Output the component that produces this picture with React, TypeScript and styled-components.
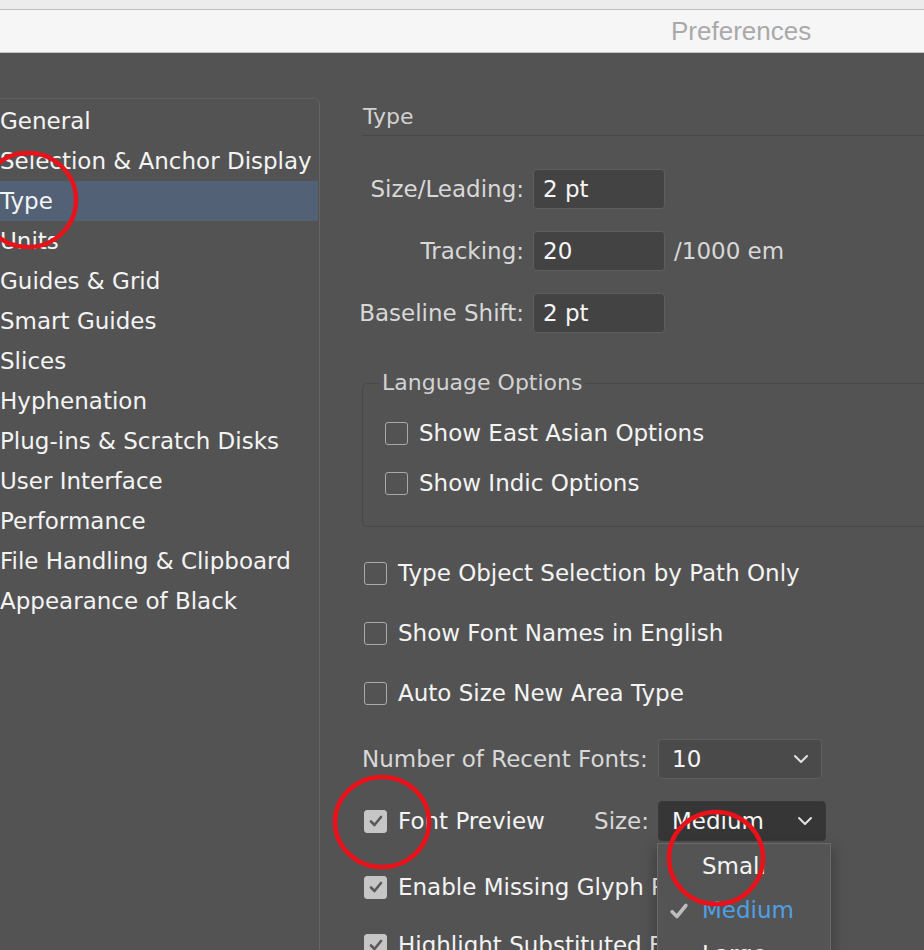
import React from "react";
import styled, { createGlobalStyle } from "styled-components";

const GlobalStyle = createGlobalStyle`
  html, body { margin: 0; padding: 0; background: #535353; overflow: hidden; }
  #root { height: 950px; }
  * { box-sizing: border-box; }
`;

const Window = styled.div`
  position: relative;
  width: 924px;
  height: 950px;
  overflow: hidden;
  display: flex;
  flex-direction: column;
  font-family: "DejaVu Sans", sans-serif;
`;

const TopStrip = styled.div`
  flex: 0 0 10px;
  height: 10px;
  background: #ececec;
  border-bottom: 1px solid #bdbdbd;
`;

const TitleBar = styled.header`
  flex: 0 0 43px;
  height: 43px;
  background: #f6f6f6;
  border-bottom: 1px solid #c6c6c6;
  display: flex;
  align-items: center;
  padding-left: 671px;
  font-family: "Liberation Sans", sans-serif;
  font-size: 26px;
  color: #a9a9a9;
  white-space: nowrap;
`;

const Body = styled.div`
  flex: 1 0 auto;
  display: flex;
  background: #535353;
  padding-top: 45px;
`;

const Sidebar = styled.nav`
  width: 320px;
  flex: 0 0 320px;
  border-top: 1px solid #606060;
  border-right: 1px solid #646464;
  border-top-right-radius: 6px;
  padding-top: 2px;
`;

const NavItem = styled.div<{ $active?: boolean }>`
  height: 40px;
  line-height: 40px;
  margin-right: 1px;
  font-size: 23px;
  color: #f4f4f4;
  white-space: nowrap;
  background: ${(p) => (p.$active ? "#536176" : "transparent")};
`;

const Main = styled.main`
  flex: 1;
  padding-left: 42px;
  display: flex;
  flex-direction: column;
  min-width: 0;
`;

const SectionHeader = styled.div`
  height: 38px;
  display: flex;
  align-items: center;
  padding-left: 1px;
  font-size: 22px;
  color: #d2d2d2;
  border-bottom: 1px solid #494949;
  margin-right: -10px;
`;

const FieldGrid = styled.div`
  margin-top: 33px;
  display: grid;
  grid-template-columns: 162px 132px auto;
  column-gap: 9px;
  row-gap: 22px;
  align-items: center;
`;

const FieldLabel = styled.label<{ $start?: boolean }>`
  justify-self: ${(p) => (p.$start ? "start" : "end")};
  white-space: nowrap;
  font-size: 23px;
  color: #d8d8d8;
`;

const TextInput = styled.div`
  height: 40px;
  display: flex;
  align-items: center;
  padding-left: 9px;
  background: #434343;
  border: 1.5px solid #5e5e5e;
  border-radius: 4px;
  font-size: 23px;
  color: #f6f6f6;
`;

const Unit = styled.span`
  font-size: 23px;
  color: #d8d8d8;
  white-space: nowrap;
`;

const Group = styled.fieldset`
  margin: 36px -20px 0 0;
  padding: 18px 0 25px 16px;
  border: 1px solid #484848;
  border-radius: 5px;
  min-width: 0;
`;

const Legend = styled.legend`
  padding: 0 3px;
  font-size: 22px;
  line-height: 28px;
  color: #d2d2d2;
`;

const GroupBody = styled.div`
  padding-left: 4px;
  display: flex;
  flex-direction: column;
  gap: 14px;
`;

const CheckList = styled.div`
  margin-top: 28px;
  display: flex;
  flex-direction: column;
  gap: 24px;
`;

const CheckRow = styled.div`
  height: 36px;
  display: flex;
  align-items: center;
  gap: 11px;
  padding-left: 2px;
  font-size: 23px;
  color: #f4f4f4;
  white-space: nowrap;
`;

const Box = styled.span<{ $checked?: boolean }>`
  width: 23px;
  height: 23px;
  flex: 0 0 23px;
  border-radius: 3px;
  border: 1.5px solid ${(p) => (p.$checked ? "#c6c6c6" : "#a9a9a9")};
  background: ${(p) => (p.$checked ? "#c6c6c6" : "transparent")};
  display: flex;
  align-items: center;
  justify-content: center;
`;

const SelectGrid = styled.div`
  margin-top: 28px;
  display: grid;
  grid-template-columns: 287px auto;
  column-gap: 9px;
  row-gap: 22px;
  align-items: center;
`;

const PreviewCell = styled.div`
  display: flex;
  align-items: center;
  justify-content: space-between;
`;

const Select = styled.div<{ $open?: boolean; $width: number }>`
  position: relative;
  width: ${(p) => p.$width}px;
  height: 40px;
  display: flex;
  align-items: center;
  justify-content: space-between;
  padding: 0 12px 0 13px;
  border-radius: 4px;
  background: ${(p) => (p.$open ? "#363636" : "#4a4a4a")};
  border: 1.5px solid ${(p) => (p.$open ? "#3a3a3a" : "#5e5e5e")};
  font-size: 23px;
  color: #f6f6f6;
`;

const Menu = styled.div`
  position: absolute;
  top: 41px;
  left: -2px;
  width: 174px;
  padding: 0;
  background: #545454;
  border: 1px solid #6a6a6a;
  box-shadow: 0 6px 14px rgba(0, 0, 0, 0.35);
  z-index: 2;
`;

const MenuItem = styled.div<{ $selected?: boolean }>`
  position: relative;
  height: 44px;
  display: flex;
  align-items: center;
  padding-left: 44px;
  font-size: 23px;
  color: ${(p) => (p.$selected ? "#4f9fe4" : "#f4f4f4")};
`;

const MenuCheck = styled.span`
  position: absolute;
  left: 10px;
  top: 12px;
  display: flex;
`;

const BottomList = styled.div`
  margin-top: 28px;
  display: flex;
  flex-direction: column;
  gap: 22px;
`;

const Annotations = styled.svg`
  position: absolute;
  left: 0;
  top: 0;
  width: 924px;
  height: 950px;
  pointer-events: none;
  z-index: 5;
`;

const Chevron = () => (
  <svg width="16" height="10" viewBox="0 0 16 10">
    <polyline points="2,2 8,8 14,2" fill="none" stroke="#e2e2e2" strokeWidth="2" strokeLinecap="round" strokeLinejoin="round" />
  </svg>
);

const Tick = ({ color, size = 16 }: { color: string; size?: number }) => (
  <svg width={size} height={size} viewBox="0 0 16 16">
    <polyline points="3,8.5 6.5,12 13,4" fill="none" stroke={color} strokeWidth="2.6" strokeLinecap="round" strokeLinejoin="round" />
  </svg>
);

const Check = ({ label, checked }: { label: string; checked?: boolean }) => (
  <CheckRow>
    <Box $checked={checked}>{checked && <Tick color="#5a5a5a" />}</Box>
    <span>{label}</span>
  </CheckRow>
);

const navItems = [
  "General",
  "Selection & Anchor Display",
  "Type",
  "Units",
  "Guides & Grid",
  "Smart Guides",
  "Slices",
  "Hyphenation",
  "Plug-ins & Scratch Disks",
  "User Interface",
  "Performance",
  "File Handling & Clipboard",
  "Appearance of Black",
];

export default function App() {
  return (
    <>
      <GlobalStyle />
      <Window>
        <TopStrip />
        <TitleBar>Preferences</TitleBar>
        <Body>
          <Sidebar>
            {navItems.map((n) => (
              <NavItem key={n} $active={n === "Type"}>
                {n}
              </NavItem>
            ))}
          </Sidebar>
          <Main>
            <SectionHeader>Type</SectionHeader>
            <FieldGrid>
              <FieldLabel>Size/Leading:</FieldLabel>
              <TextInput>2 pt</TextInput>
              <span />
              <FieldLabel>Tracking:</FieldLabel>
              <TextInput>20</TextInput>
              <Unit>/1000 em</Unit>
              <FieldLabel>Baseline Shift:</FieldLabel>
              <TextInput>2 pt</TextInput>
              <span />
            </FieldGrid>
            <Group>
              <Legend>Language Options</Legend>
              <GroupBody>
                <Check label="Show East Asian Options" />
                <Check label="Show Indic Options" />
              </GroupBody>
            </Group>
            <CheckList>
              <Check label="Type Object Selection by Path Only" />
              <Check label="Show Font Names in English" />
              <Check label="Auto Size New Area Type" />
            </CheckList>
            <SelectGrid>
              <FieldLabel $start>Number of Recent Fonts:</FieldLabel>
              <Select $width={164}>
                <span>10</span>
                <Chevron />
              </Select>
              <PreviewCell>
                <Check label="Font Preview" checked />
                <FieldLabel>Size:</FieldLabel>
              </PreviewCell>
              <Select $width={168} $open>
                <span>Medium</span>
                <Chevron />
                <Menu>
                  <MenuItem>Small</MenuItem>
                  <MenuItem $selected>
                    <MenuCheck>
                      <Tick color="#bdbdbd" size={22} />
                    </MenuCheck>
                    Medium
                  </MenuItem>
                  <MenuItem>Large</MenuItem>
                </Menu>
              </Select>
            </SelectGrid>
            <BottomList>
              <Check label="Enable Missing Glyph Protection" checked />
              <Check label="Highlight Substituted Fonts" checked />
            </BottomList>
          </Main>
        </Body>
        <Annotations viewBox="0 0 924 950">
          <ellipse cx="28" cy="200" rx="48" ry="47" fill="none" stroke="#e8121a" strokeWidth="4.5" />
          <ellipse cx="382" cy="822" rx="47" ry="45" fill="none" stroke="#e8121a" strokeWidth="4.5" />
          <ellipse cx="716" cy="858" rx="47" ry="46" fill="none" stroke="#e8121a" strokeWidth="4.5" />
        </Annotations>
      </Window>
    </>
  );
}
